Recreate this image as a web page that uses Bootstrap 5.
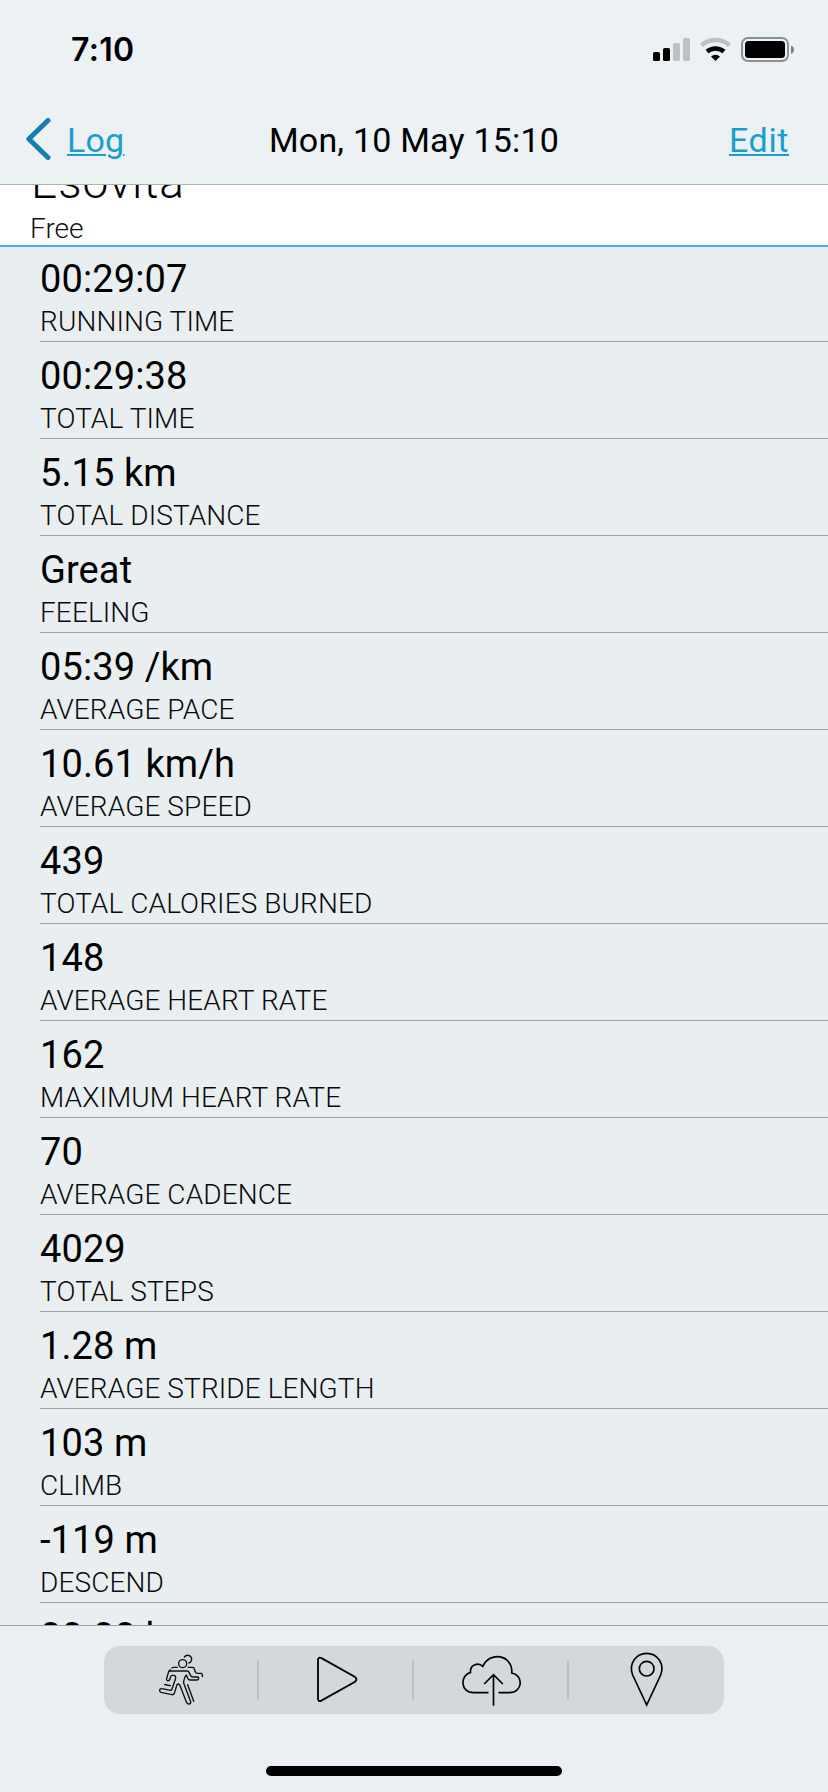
<!DOCTYPE html>
<html lang="en">
<head>
<meta charset="utf-8">
<meta name="viewport" content="width=device-width, initial-scale=1">
<title>Workout details</title>
<link href="https://cdn.jsdelivr.net/npm/bootstrap@5.3.0/dist/css/bootstrap.min.css" rel="stylesheet">
<style>
body{font-family:Roboto,"Liberation Sans",sans-serif;background:#e9eff1;color:#000;height:1792px;overflow:hidden}
.app{height:1792px}
.top{height:185px;background:#ecf1f4;border-bottom:1px solid #aeb1b3}
.status{height:96px;padding:4px 34px 0 71px}
.clock{font:600 32px/40px Inter,sans-serif;letter-spacing:.3px}
.titlebar{height:88px;font-size:34px;line-height:40px;padding:0 39px 0 26px;letter-spacing:.2px}
.titlebar a{color:#1b9dd0;text-decoration:underline;text-underline-offset:2px;text-decoration-thickness:2px;text-decoration-skip-ink:auto}
.side-start{width:160px}
.side-start svg{margin-top:-3px}
.back-link{margin-left:15px}
.side-end{width:147px;letter-spacing:.6px}
.plan{height:62px;background:#fff;border-bottom:2px solid #41b7e8;font-weight:300}
.plan h1{font-size:46px;line-height:44px;font-weight:300;margin:-25px 0 0 31px;letter-spacing:1px}
.plan p{font-size:28px;line-height:34px;margin:8px 0 0 30px;color:#111}
.stats{overflow:hidden}
.stat{height:97px;flex:none;margin-left:40px;padding-top:12px;border-bottom:1px solid #9da0a3}
.stat:first-child{height:95px;padding-top:10px}
.val{font-size:38px;line-height:44px;letter-spacing:.1px}
.lab{font-size:28px;line-height:34px;font-weight:300;margin-top:4px;color:#0a0a0a;letter-spacing:.1px}
.bottom{height:167px;background:#ebeff3;border-top:1px solid #9fa2a5;padding-top:20px}
.tools{width:620px;height:68px;border-radius:16px;background:#d4d7dc}
.tools button{flex:1;border:0;background:none;padding:0;position:relative;height:68px}
.tools button+button::before{content:"";position:absolute;left:-2px;top:14px;width:2px;height:40px;border-radius:1px;background:#bbbec3}
.tools svg{display:block;width:100%;height:68px}
.home{width:296px;height:10px;border-radius:5px;background:#000;margin-top:52px}
</style>
</head>
<body>
<div class="app d-flex flex-column">
  <header class="top flex-shrink-0">
    <div class="status d-flex justify-content-between align-items-center">
      <span class="clock">7:10</span>
      <svg width="142" height="26" viewBox="0 0 142 26">
        <g fill="#000"><rect x="1" y="15" width="7" height="9" rx="1.6"/><rect x="11" y="11" width="7" height="13" rx="1.6"/></g>
        <g fill="#bdc1c4"><rect x="21" y="6" width="7" height="18" rx="1.6"/><rect x="31" y="1" width="7" height="23" rx="1.6"/></g>
        <path d="M49.500 8.300a21.500 21.500 0 0 1 28 0" fill="none" stroke="#bdc1c4" stroke-width="4.500"/>
        <path d="M55 14.500a13.500 13.500 0 0 1 17 0" fill="none" stroke="#000" stroke-width="4.500"/>
        <path d="M59 19.500a7 7 0 0 1 9 0l-4.500 4.500z"/>
        <rect x="90" y="1" width="46" height="23" rx="6" fill="none" stroke="#8e9193" stroke-width="2"/>
        <rect x="93" y="4" width="40" height="17" rx="3.500"/>
        <path d="M139 8.500q3 1 3 4.200t-3 4.200z" fill="#7e8183"/>
      </svg>
    </div>
    <nav class="titlebar d-flex justify-content-between align-items-center">
      <div class="side-start d-flex align-items-center">
        <svg width="26" height="44" viewBox="0 0 26 44"><path d="M22 3.500 2.800 22 22 40.500" fill="none" stroke="#147fab" stroke-width="5" stroke-linecap="round" stroke-linejoin="round"/></svg>
        <a class="back-link" href="#">Log</a>
      </div>
      <span>Mon, 10 May 15:10</span>
      <div class="side-end text-end"><a href="#">Edit</a></div>
    </nav>
  </header>
  <section class="plan flex-shrink-0 overflow-hidden"><h1>Esovita</h1><p>Free</p></section>
  <main class="stats d-flex flex-column flex-grow-1">
    <div class="stat"><div class="val">00:29:07</div><div class="lab">RUNNING TIME</div></div>
    <div class="stat"><div class="val">00:29:38</div><div class="lab">TOTAL TIME</div></div>
    <div class="stat"><div class="val">5.15 km</div><div class="lab">TOTAL DISTANCE</div></div>
    <div class="stat"><div class="val">Great</div><div class="lab">FEELING</div></div>
    <div class="stat"><div class="val">05:39 /km</div><div class="lab">AVERAGE PACE</div></div>
    <div class="stat"><div class="val">10.61 km/h</div><div class="lab">AVERAGE SPEED</div></div>
    <div class="stat"><div class="val">439</div><div class="lab">TOTAL CALORIES BURNED</div></div>
    <div class="stat"><div class="val">148</div><div class="lab">AVERAGE HEART RATE</div></div>
    <div class="stat"><div class="val">162</div><div class="lab">MAXIMUM HEART RATE</div></div>
    <div class="stat"><div class="val">70</div><div class="lab">AVERAGE CADENCE</div></div>
    <div class="stat"><div class="val">4029</div><div class="lab">TOTAL STEPS</div></div>
    <div class="stat"><div class="val">1.28 m</div><div class="lab">AVERAGE STRIDE LENGTH</div></div>
    <div class="stat"><div class="val">103 m</div><div class="lab">CLIMB</div></div>
    <div class="stat"><div class="val">-119 m</div><div class="lab">DESCEND</div></div>
    <div class="stat"><div class="val">00.00 k</div></div>
  </main>
  <footer class="bottom flex-shrink-0 d-flex flex-column align-items-center">
    <div class="tools d-flex">
      <button aria-label="Workout"><svg viewBox="312 258 465 204" fill="none" stroke="#111" stroke-width="4.200" stroke-linejoin="round" stroke-linecap="round">
        <circle cx="548" cy="311" r="12"/>
        <path d="M553 291a12 12 0 1 1 14 18M516 324q1-2 4-2h12M564 322h14q3 0 4 3l4 10q2 5 6 5h12q4 1 3 10"/>
        <path d="M507 333h55q3 0 5 4l5 10q2 4 6 4h15q4 1 3 5t-6 4h-21q-3 0-5-4l-5-11q-6 6-8 19-1 4 1 8l20 53q1 6-4 7t-8-4l-21-54-5-2q-3 1-4 5l-7 23q-2 5-7 4l-33-7q-5-2-4-7t7-4l25 5q4 0 5-4l11-32q1-7-4-9h-7q-3 0-4 4l-3 9q-3 5-7 3t-2-7l6-20q2-4 5-5z"/>
        <path d="M494 374q3-1 6 1l11 2M563 374l18 50"/>
      </svg></button>
      <button aria-label="Play"><svg viewBox="777 258 465 204" fill="none" stroke="#000" stroke-width="5.500"><path d="M954 301v114q0 12 10 7l100-56q11-8 0-16l-98-55q-12-6-12 6z"/></svg></button>
      <button aria-label="Upload"><svg viewBox="0 258 462 204" fill="none" stroke="#000" stroke-width="5"><path d="M222 398h-45c-40 0-41-52-9-61-2-24 24-31 37-18 20-46 90-36 87 20 36 7 33 59-7 59h-33M237 437v-92M209 372l28-28 28 28"/></svg></button>
      <button aria-label="Map"><svg viewBox="462 258 465 204" fill="none" stroke="#000" stroke-width="5"><path d="M695 435l-42-90c-13-33 10-65 42-65s55 32 42 65z"/><circle cx="695" cy="326" r="22"/></svg></button>
    </div>
    <div class="home"></div>
  </footer>
</div>
<script src="https://cdn.jsdelivr.net/npm/bootstrap@5.3.0/dist/js/bootstrap.bundle.min.js"></script>
</body>
</html>
